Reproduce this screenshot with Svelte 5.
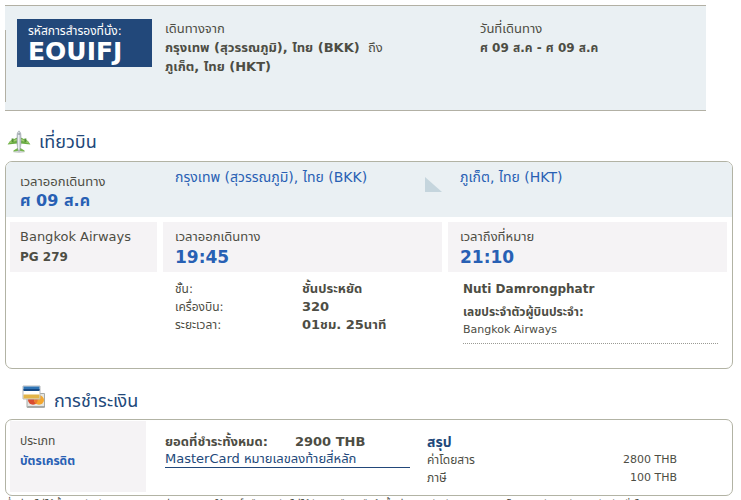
<script>
  const details = [
    ['ชั้น:', 'ชั้นประหยัด'],
    ['เครื่องบิน:', '320'],
    ['ระยะเวลา:', '01ชม. 25นาที'],
  ];
  const charges = [
    ['ค่าโดยสาร', '2800 THB'],
    ['ภาษี', '100 THB'],
  ];
</script>

<main>
  <header>
    <div class="code"><span>รหัสการสำรองที่นั่ง:</span><strong>EOUIFJ</strong></div>
    <div class="route">
      <p>เดินทางจาก</p>
      <p><b>กรุงเทพ (สุวรรณภูมิ), ไทย (BKK)</b>&nbsp; ถึง</p>
      <p><b>ภูเก็ต, ไทย (HKT)</b></p>
    </div>
    <div class="dates">
      <p>วันที่เดินทาง</p>
      <p><b>ศ 09 ส.ค - ศ 09 ส.ค</b></p>
    </div>
  </header>

  <h2 class="flight-title">
    <svg width="24" height="24" viewBox="0 0 24 24" aria-hidden="true">
      <ellipse cx="12" cy="21.8" rx="6" ry="1.1" fill="#cfd3d3" />
      <path d="M10.2 7.5 3 11 .6 14.6 10.3 13.4Zm3.6 0L21 11l2.4 3.6-9.7-1.2Z" fill="#6aad43" />
      <path d="M3.3 11.2 10.2 8.8v1.6L1.8 13.4Zm17.4 0-6.9-2.4v1.6l8.4 3Z" fill="#a0ce70" />
      <path d="M4.6 8.5h2v3.5h-2Zm12.8 0h2V12h-2Z" fill="#549236" />
      <path d="M10.6 18 6.5 20.4v1.2l5.5-.8 5.5.8v-1.2L13.4 18Z" fill="#76b64c" />
      <path d="M12 .8c-1.5 1-2 3-2 5.2v8l1.2 7h1.6l1.2-7V6c0-2.2-.5-4.2-2-5.2Z" fill="#bfc6cb" stroke="#929ba2" stroke-width=".5" />
      <path d="M11.7 2.5v17" stroke="#eef1f3" stroke-width="1.3" />
      <path d="M10.8 4h2.4" stroke="#737f88" />
    </svg>
    เที่ยวบิน
  </h2>

  <section class="card flight">
    <div class="heading columns">
      <div class="depart"><span>เวลาออกเดินทาง</span><b>ศ 09 ส.ค</b></div>
      <div class="origin">
        กรุงเทพ (สุวรรณภูมิ), ไทย (BKK)
        <svg width="17" height="15" viewBox="0 0 17 15" aria-hidden="true"><path d="M0 0V15H17Z" fill="#c5d5dd" /></svg>
      </div>
      <div class="destination">ภูเก็ต, ไทย (HKT)</div>
    </div>
    <div class="times columns">
      <div class="airline"><span>Bangkok Airways</span><b>PG 279</b></div>
      <div><span>เวลาออกเดินทาง</span><b>19:45</b></div>
      <div><span>เวลาถึงที่หมาย</span><b>21:10</b></div>
    </div>
    <div class="information columns">
      <dl>
        {#each details as [label, value]}
          <div><dt>{label}</dt><dd>{value}</dd></div>
        {/each}
      </dl>
      <div class="passenger">
        <b class="name">Nuti Damrongphatr</b>
        <b>เลขประจำตัวผู้บินประจำ:</b>
        <span>Bangkok Airways</span>
      </div>
    </div>
  </section>

  <h2 class="payment-title">
    <svg width="24" height="24" viewBox="0 0 24 24" aria-hidden="true">
      <path d="M5 8.5h17.5v13.8H5Z" fill="#e5e6e2" stroke="#a8aaa6" />
      <path d="M5.5 21.8h17" stroke="#8d9290" />
      <ellipse cx="11" cy="15" rx="5" ry="4.7" fill="#d94c31" />
      <ellipse cx="17" cy="15" rx="5" ry="4.7" fill="#f4a72f" />
      <path d="M14 11.3a4.8 4.8 0 0 1 0 7.4 4.8 4.8 0 0 1 0-7.4Z" fill="#ed7930" />
      <path d="M1 1h17v13H1Z" fill="#fff" stroke="#b6b9bd" />
      <path d="M1.5 1.5h16v3.5h-16Z" fill="#2f74b5" />
      <path d="M1.5 4h16v2h-16Z" fill="#174982" />
      <path d="M1.5 9.5h16v4h-16Z" fill="#e2b449" />
    </svg>
    <span>การชำระเงิน</span>
  </h2>

  <section class="card payment">
    <div class="type"><span>ประเภท</span><b>บัตรเครดิต</b></div>
    <div class="paid">
      <p><b>ยอดที่ชำระทั้งหมด:</b><b>2900 THB</b></p>
      <a href="#card">MasterCard หมายเลขลงท้ายสี่หลัก</a>
    </div>
    <div class="summary">
      <h3>สรุป</h3>
      <table>
        <tbody>
          {#each charges as [label, amount]}
            <tr><th scope="row">{label}</th><td>{amount}</td></tr>
          {/each}
        </tbody>
      </table>
    </div>
  </section>
  <p class="note">ซึ่งท่านไม่ได้ซื้อประกันภัยการเดินทาง ท่านสามารถใช้สิทธิ์หรือประกันไม่ได้รับเงินคืน หรือถ้าซื้อท่านประกันภัยการเดินทางโดยตรงกับบริษัทประกันภัยทั่วไป</p>
</main>

<style>
  :global(body) { margin: 0; background: #fff; }
  main {
    height: 100vh;
    box-sizing: border-box;
    padding: 5px 8px 0 5px;
    overflow: hidden;
    color: #4d4d44;
    font: 13px/18px "DejaVu Sans", Tahoma, "Noto Sans Thai", sans-serif;
  }
  p, h2, h3, dl, dd { margin: 0; }
  header {
    display: flex;
    box-sizing: border-box;
    min-height: 106px;
    margin-right: 27px;
    padding: 13px 12px 0;
    border: solid #b2b0a4;
    border-width: 1px 0;
    background: linear-gradient(#b2b0a4, #b2b0a4) 0 24px / 1px 72px no-repeat #eaf0f3;
  }
  .code {
    display: flex;
    flex-direction: column;
    box-sizing: border-box;
    width: 135px;
    height: 48px;
    padding: 3px 11px;
    background: #22487a;
    color: #fff;
    font-size: 12px;
    white-space: nowrap;
  }
  .code strong { font-size: 25px; line-height: 24px; }
  .route { flex: 1; padding-left: 13px; }
  .route, .dates { line-height: 19px; }
  .dates { width: 214px; }
  .dates b { font-size: 12px; }
  h2 {
    display: flex;
    align-items: center;
    color: #22487a;
    font-size: 18px;
    font-weight: 400;
    line-height: 24px;
  }
  .flight-title { gap: 8px; padding: 19px 0 7px 2px; }
  .payment-title { gap: 8px; align-items: flex-start; padding: 16px 0 6px 17px; }
  .payment-title span { padding-top: 4px; }
  .card { border: 1px solid #b2b3a4; border-radius: 7px; overflow: hidden; }
  .columns { display: grid; grid-template-columns: 147fr 279fr 279fr; gap: 6px; padding: 0 5px 0 4px; }
  .heading { height: 55px; background: #eaf0f3; color: #2860b4; }
  .depart { padding: 11px 10px; color: #4d4d44; }
  .depart span, .depart b { display: block; }
  .depart b { color: #2860b4; font-size: 16px; line-height: 20px; }
  .origin { display: flex; justify-content: space-between; padding: 6px 0 0 12px; }
  .origin, .destination { font-size: 14px; }
  .origin svg { margin-top: 9px; }
  .destination { padding: 6px 12px; }
  .times { padding-top: 5px; }
  .times > div { height: 50px; box-sizing: border-box; padding: 6px 12px; background: #f5f3f5; }
  .times .airline { padding-left: 10px; }
  .times span, .times b { display: block; }
  .times b { color: #2860b4; font-size: 17px; line-height: 22px; }
  .times .airline b { color: #4d4d44; font-size: 12px; }
  .information { min-height: 96px; }
  dl { grid-column: 2; padding: 8px 12px; }
  dl div { display: flex; }
  dt { width: 127px; font-size: 12px; }
  dd { font-weight: 700; }
  .passenger { display: flex; flex-direction: column; align-self: start; margin: 8px 9px 0 15px; padding-bottom: 4px; border-bottom: 1px dotted #9a9a94; font-size: 12px; }
  .passenger .name { padding-bottom: 5px; }
  .passenger span { font-size: 11px; }
  .payment { display: flex; height: 75px; padding-left: 4px; font-size: 12px; }
  .type { display: flex; flex-direction: column; width: 126px; margin: 1px 0 3px; padding: 11px 0 0 10px; gap: 2px; background: #f5f3f5; }
  .type b { color: #2860b4; }
  .paid { width: 245px; padding: 13px 17px 0 19px; font-size: 13px; }
  .paid p { display: flex; gap: 27px; white-space: nowrap; }
  a { display: block; border-bottom: 1px solid #22487a; color: #22487a; text-decoration: none; line-height: 16px; }
  .summary { flex: 1; padding: 13px 55px 0 0; }
  h3 { color: #22487a; font-size: 14px; line-height: 18px; }
  table { width: 100%; border-collapse: collapse; }
  th, td { padding: 0; font-weight: 400; text-align: left; }
  td { font-size: 11px; text-align: right; }
  .note { font-size: 11px; white-space: nowrap; overflow: hidden; }
</style>
